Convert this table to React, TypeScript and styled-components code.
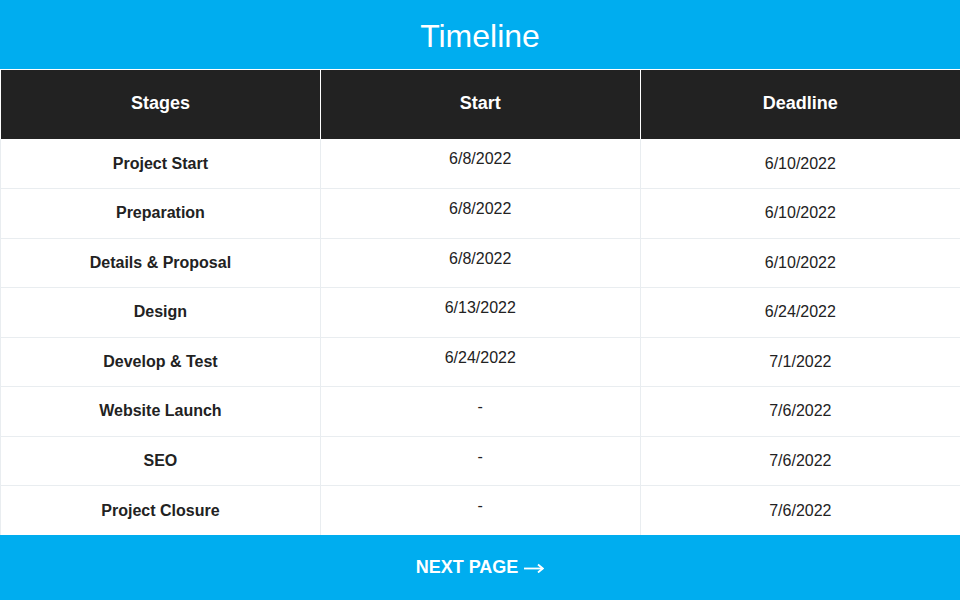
import React from 'react';
import styled, {createGlobalStyle} from 'styled-components';

const rows = [
    {stage: 'Project Start', start: '6/8/2022', deadline: '6/10/2022'},
    {stage: 'Preparation', start: '6/8/2022', deadline: '6/10/2022'},
    {stage: 'Details & Proposal', start: '6/8/2022', deadline: '6/10/2022'},
    {stage: 'Design', start: '6/13/2022', deadline: '6/24/2022'},
    {stage: 'Develop & Test', start: '6/24/2022', deadline: '7/1/2022'},
    {stage: 'Website Launch', start: '-', deadline: '7/6/2022'},
    {stage: 'SEO', start: '-', deadline: '7/6/2022'},
    {stage: 'Project Closure', start: '-', deadline: '7/6/2022'},
];

const GlobalStyle = createGlobalStyle`
  html, body {
    margin: 0;
    padding: 0;
    background: #ffffff;
    font-family: "Liberation Sans", Arial, sans-serif;
  }
`;

export default function App() {
    return (
        <Page>
            <GlobalStyle />
            <TitleBar>Timeline</TitleBar>
            <Table>
                <thead>
                    <tr>
                        <HeadCell>Stages</HeadCell>
                        <HeadCell>Start</HeadCell>
                        <HeadCell>Deadline</HeadCell>
                    </tr>
                </thead>
                <tbody>
                    {rows.map((r, i) => (
                        <BodyRow key={`row-${i}`}>
                            <StageCell>{r.stage}</StageCell>
                            <StartCell>{r.start}</StartCell>
                            <DateCell>{r.deadline}</DateCell>
                        </BodyRow>
                    ))}
                </tbody>
            </Table>
            <Footer>
                NEXT PAGE
                <svg width="20" height="10" viewBox="0 0 20 10" fill="none" stroke="#ffffff" strokeWidth="1.8">
                    <path d="M0 5.5 H18.5" />
                    <path d="M14 1.5 L18.8 5.5 L14 9.5" />
                </svg>
            </Footer>
        </Page>
    );
}

const Page = styled.div`
  width: 960px;
  height: 600px;
  display: flex;
  flex-direction: column;
  overflow: hidden;
`;

const TitleBar = styled.div`
  height: 69px;
  box-sizing: border-box;
  padding-top: 3px;
  flex-shrink: 0;
  background: #00adef;
  color: #ffffff;
  font-size: 32px;
  display: flex;
  align-items: center;
  justify-content: center;
`;

const Table = styled.table`
  width: 960px;
  border-collapse: collapse;
  table-layout: fixed;
  border-top: 1px solid #ffffff;
`;

const HeadCell = styled.th`
  height: 67px;
  padding: 0 0 2px;
  background: #222222;
  color: #ffffff;
  font-size: 18px;
  font-weight: bold;
  text-align: center;
  border-left: 1px solid #ffffff;
`;

const BodyRow = styled.tr`
  height: 49.5px;
  border-bottom: 1px solid #e9edf0;
  &:last-child {
    border-bottom: none;
  }
`;

const Cell = styled.td`
  padding: 0;
  font-size: 16px;
  color: #222222;
  text-align: center;
  vertical-align: middle;
  border-left: 1px solid #e9edf0;
`;

const StageCell = styled(Cell)`
  font-weight: bold;
`;

const StartCell = styled(Cell)`
  vertical-align: top;
  padding-top: 11px;
`;

const DateCell = styled(Cell)``;

const Footer = styled.div`
  flex: 1;
  background: #00adef;
  color: #ffffff;
  font-size: 18px;
  font-weight: bold;
  display: flex;
  align-items: center;
  justify-content: center;
  gap: 6px;
`;
